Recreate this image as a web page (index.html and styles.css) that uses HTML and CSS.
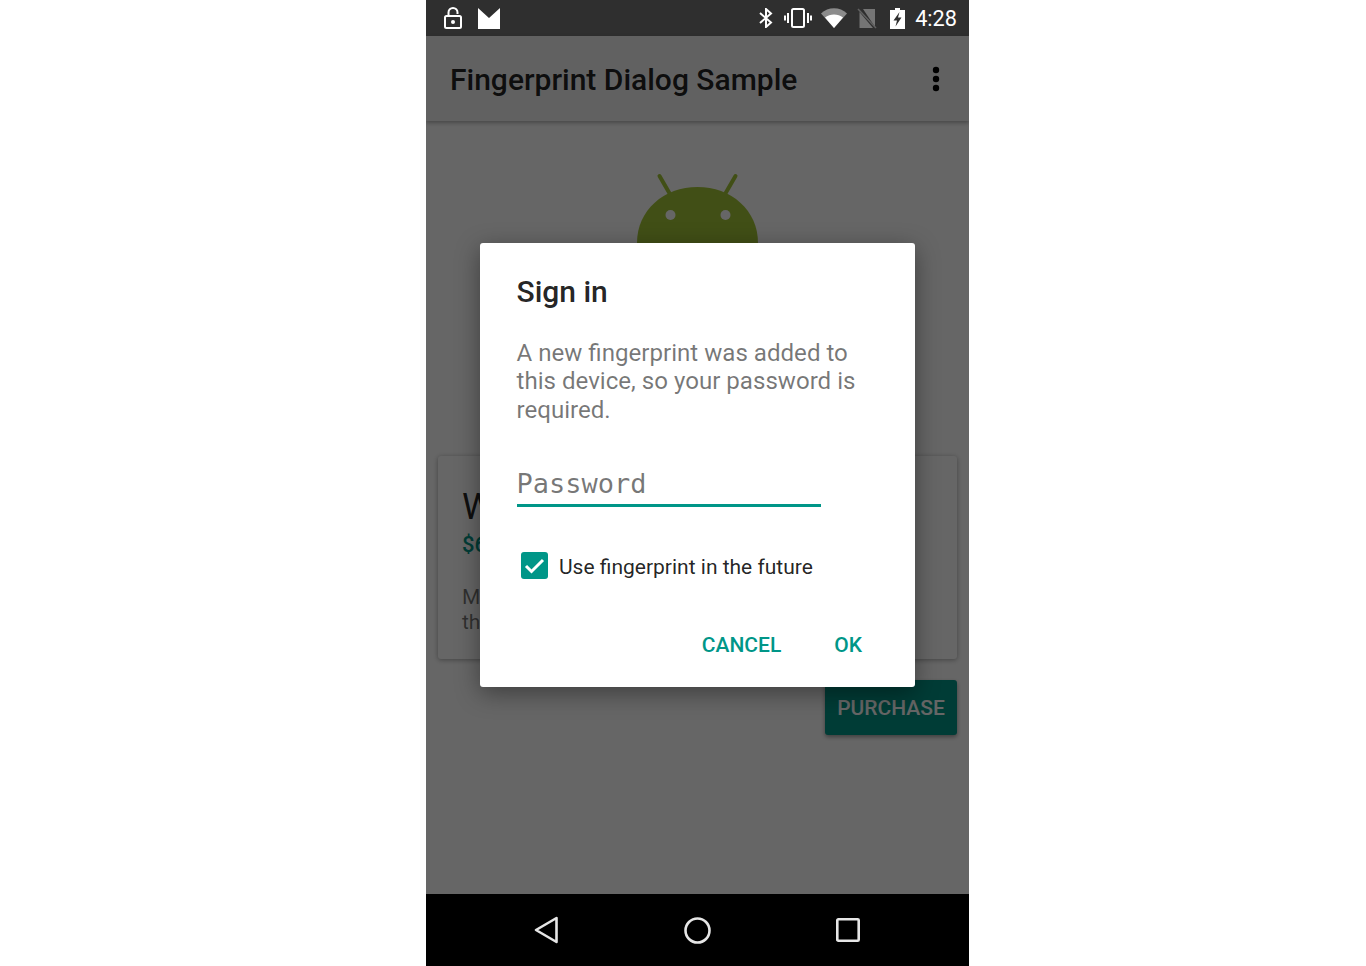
FILE: index.html
```html
<!DOCTYPE html>
<html lang="en">

<head>
    <meta charset="UTF-8">
    <title>Fingerprint Dialog Sample</title>
    <link rel="stylesheet" href="styles.css">
</head>

<body>
    <div class="phone">
        <div class="status-bar">
            <div class="status-left">
                <svg class="ic-lock" width="18" height="22" viewBox="0 0 18 22">
                    <path d="M4.5 9V5.5a4.5 4.5 0 0 1 9 0V7" fill="none" stroke="#fff" stroke-width="2"/>
                    <rect x="1" y="9" width="16" height="12" rx="1.5" fill="none" stroke="#fff" stroke-width="2"/>
                    <circle cx="9" cy="15" r="2" fill="#fff"/>
                </svg>
                <svg class="ic-gmail" width="22" height="21" viewBox="0 0 22 21">
                    <path d="M0 0L11 10L22 0V21H0Z" fill="#fff"/>
                </svg>
            </div>
            <div class="status-right">
                <svg class="ic-bt" width="14" height="20" viewBox="0 0 14 20">
                    <path d="M1 5L12 14.5L7 19V1L12 5.5L1 15" fill="none" stroke="#fff" stroke-width="2"/>
                </svg>
                <svg class="ic-vib" width="28" height="20" viewBox="0 0 28 20">
                    <rect x="8" y="1" width="12" height="18" rx="1.5" fill="none" stroke="#fff" stroke-width="2"/>
                    <path d="M4 5V15M1 7.5V12.5M24 5V15M27 7.5V12.5" stroke="#fff" stroke-width="2"/>
                </svg>
                <svg class="ic-wifi" width="26" height="20" viewBox="0 0 26 20">
                    <path d="M0 5.5C7 -1.5 19 -1.5 26 5.5L13 20Z" fill="#8c8c8c"/>
                    <path d="M4 9.5C9 5.5 17 5.5 22 9.5L13 20Z" fill="#fff"/>
                </svg>
                <svg class="ic-sim" width="20" height="21" viewBox="0 0 20 21">
                    <path d="M6 1H18V19ZM2.5 4V20H16Z" fill="#757575"/>
                    <path d="M1 1L19 20" stroke="#616161" stroke-width="1.5"/>
                </svg>
                <svg class="ic-bat" width="15" height="21" viewBox="0 0 15 21">
                    <path d="M5 0H10V2H15V21H0V2H5Z" fill="#fff"/>
                    <path d="M9.5 4L3.5 12.5H7L5.5 18.5L11.5 9.5H8Z" fill="#2f2f2f"/>
                </svg>
                <span class="clock">4:28</span>
            </div>
        </div>

        <div class="screen">
            <div class="toolbar">
                <span class="app-title">Fingerprint Dialog Sample</span>
                <svg class="overflow" width="8" height="26" viewBox="0 0 8 26">
                    <circle cx="4" cy="4" r="3.2" fill="#000"/>
                    <circle cx="4" cy="13" r="3.2" fill="#000"/>
                    <circle cx="4" cy="22" r="3.2" fill="#000"/>
                </svg>
            </div>

            <div class="content">
                <svg class="android" width="124" height="284" viewBox="0 0 124 284">
                    <path d="M23.5 4L34.5 23M99.5 4L88.5 23" stroke="#a4c639" stroke-width="4" stroke-linecap="round"/>
                    <path d="M1 71C1 38 28 15 61.5 15S122 38 122 71Z" fill="#a4c639"/>
                    <circle cx="34.5" cy="43" r="5" fill="#fff"/>
                    <circle cx="89.5" cy="43" r="5" fill="#fff"/>
                    <rect x="2" y="76" width="120" height="130" rx="10" fill="#a4c639"/>
                </svg>

                <div class="card">
                    <div class="card-title">White Mesh Pluto</div>
                    <div class="card-price">$62.68</div>
                    <div class="card-desc">Mesh backpack in white. Black textile<br>the main pocket and straps.</div>
                </div>

                <div class="actions">
                    <button class="purchase">PURCHASE</button>
                </div>
            </div>

            <div class="scrim"></div>

            <div class="dialog">
                <div class="dialog-title">Sign in</div>
                <div class="dialog-msg">A new fingerprint was added to this device, so your password is required.</div>
                <div class="password">Password</div>
                <div class="check-row">
                    <svg class="checkbox" width="27" height="27" viewBox="0 0 27 27">
                        <rect width="27" height="27" rx="3" fill="#009688"/>
                        <path d="M5 14L10.5 19.5L22 8" fill="none" stroke="#fff" stroke-width="3"/>
                    </svg>
                    <span class="check-label">Use fingerprint in the future</span>
                </div>
                <div class="dialog-buttons">
                    <span class="dialog-btn">CANCEL</span>
                    <span class="dialog-btn">OK</span>
                </div>
            </div>
        </div>

        <div class="nav-bar">
            <svg width="24" height="28" viewBox="0 0 24 28">
                <path d="M2 14L22.5 2V26Z" fill="none" stroke="#e6e6e6" stroke-width="2.6" stroke-linejoin="round"/>
            </svg>
            <svg width="27" height="27" viewBox="0 0 27 27">
                <circle cx="13.5" cy="13.5" r="12" fill="none" stroke="#e6e6e6" stroke-width="2.6"/>
            </svg>
            <svg width="24" height="24" viewBox="0 0 24 24">
                <rect x="1.3" y="1.3" width="21.4" height="21.4" rx="1" fill="none" stroke="#e6e6e6" stroke-width="2.6"/>
            </svg>
        </div>
    </div>
</body>

</html>
```
FILE: styles.css
```css
body {
    margin: 0;
    background-color: #fff;
    font-family: Roboto, "Liberation Sans", sans-serif;
}

.phone {
    display: flex;
    flex-direction: column;
    width: 543px;
    height: 966px;
    margin-left: 426px;
    overflow: hidden;
}

.status-bar {
    display: flex;
    justify-content: space-between;
    align-items: center;
    flex: none;
    height: 36px;
    padding: 0 12px 0 18px;
    background-color: #2f2f2f;
    color: #fff;
}

.status-left,
.status-right {
    display: flex;
    align-items: center;
}

.status-left {
    gap: 16px;
}

.ic-bt {
    margin-right: 11px;
}

.ic-vib {
    margin-right: 9px;
}

.ic-wifi {
    margin-right: 10px;
}

.ic-sim {
    margin-right: 13px;
}

.ic-bat {
    margin-right: 10.5px;
}

.clock {
    padding-top: 2px;
    font-size: 21.7px;
    line-height: 36px;
}

.screen {
    position: relative;
    flex: 1;
    background-color: #fff;
}

.toolbar {
    display: flex;
    justify-content: space-between;
    align-items: center;
    height: 85px;
    padding: 0 29px 0 24px;
    box-sizing: border-box;
    background-color: #f3f3f3;
    box-shadow: 0 2px 4px rgba(0, 0, 0, 0.3);
}

.app-title {
    padding-top: 2px;
    font-size: 30px;
    font-weight: 500;
    color: rgba(0, 0, 0, 0.87);
}

.content {
    display: flex;
    flex-direction: column;
    padding: 51px 12px 0;
}

.android {
    display: block;
    align-self: center;
}

.card {
    height: 203px;
    box-sizing: border-box;
    padding: 27px 24px 0;
    background-color: #fff;
    border-radius: 3px;
    box-shadow: 0 1px 5px rgba(0, 0, 0, 0.35);
}

.card-title {
    font-size: 36px;
    line-height: 48px;
    color: rgba(0, 0, 0, 0.87);
}

.card-price {
    margin-top: 1px;
    font-size: 22px;
    line-height: 26px;
    font-weight: 500;
    color: #009688;
}

.card-desc {
    margin-top: 27px;
    font-size: 21px;
    line-height: 24.5px;
    color: rgba(0, 0, 0, 0.54);
}

.actions {
    display: flex;
    justify-content: flex-end;
    margin-top: 21px;
}

.purchase {
    width: 132px;
    height: 55px;
    padding: 0;
    border: none;
    border-radius: 3px;
    background-color: #009688;
    color: #fff;
    font-family: Roboto, "Liberation Sans", sans-serif;
    font-size: 21px;
    font-weight: 500;
    box-shadow: 0 2px 4px rgba(0, 0, 0, 0.4);
}

.scrim {
    position: absolute;
    top: 0;
    left: 0;
    right: 0;
    bottom: 0;
    background-color: rgba(0, 0, 0, 0.6);
}

.dialog {
    position: absolute;
    top: 207px;
    left: 54px;
    width: 435px;
    height: 444px;
    box-sizing: border-box;
    padding: 30px 36px 0 36.5px;
    background-color: #fff;
    border-radius: 3px;
    box-shadow: 0 6px 24px rgba(0, 0, 0, 0.4);
}

.dialog-title {
    font-size: 30px;
    line-height: 38px;
    font-weight: 500;
    color: rgba(0, 0, 0, 0.87);
}

.dialog-msg {
    margin-top: 27.5px;
    width: 350px;
    font-size: 24.1px;
    line-height: 28.5px;
    color: rgba(0, 0, 0, 0.54);
}

.password {
    width: 304.5px;
    height: 50px;
    margin-top: 33px;
    padding-top: 10px;
    box-sizing: border-box;
    border-bottom: 3px solid #009688;
    font-family: "DejaVu Sans Mono", "Liberation Mono", monospace;
    font-size: 27px;
    line-height: 34px;
    color: rgba(0, 0, 0, 0.54);
}

.check-row {
    display: flex;
    align-items: center;
    gap: 11px;
    margin-top: 44.5px;
    margin-left: 4.5px;
    font-size: 21px;
    color: rgba(0, 0, 0, 0.87);
}

.check-label {
    position: relative;
    top: 1.5px;
}

.dialog-buttons {
    display: flex;
    justify-content: flex-end;
    gap: 53px;
    margin-top: 54px;
    padding-right: 17px;
}

.dialog-btn {
    font-size: 21px;
    font-weight: 500;
    color: #009688;
}

.nav-bar {
    display: flex;
    justify-content: space-between;
    align-items: center;
    flex: none;
    height: 72px;
    padding: 0 109px 0 108px;
    box-sizing: border-box;
    background-color: #000;
}
```
